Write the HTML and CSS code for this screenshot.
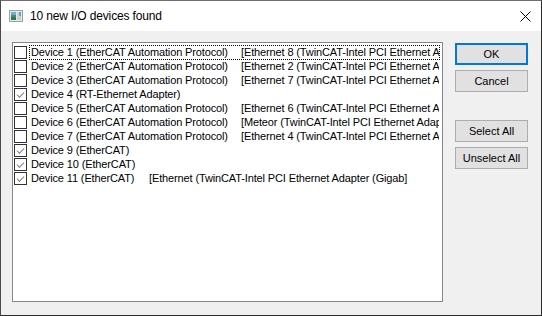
FILE: index.html
```html
<!DOCTYPE html>
<html>
<head>
<meta charset="utf-8">
<link rel="stylesheet" href="styles.css">
</head>
<body>
<div class="window">
  <div class="titlebar">
    <svg class="app-icon" width="14" height="12" viewBox="0 0 14 12">
      <rect x="0.5" y="0.5" width="13" height="11" fill="#e8e8e8" stroke="#a0a0a0"/>
      <rect x="2" y="2" width="5" height="8" fill="#3d8c8c"/>
      <rect x="2" y="2" width="5" height="3" fill="#6fb0c8"/>
      <rect x="2" y="7" width="5" height="3" fill="#2f7a4a"/>
      <rect x="8" y="2" width="4" height="8" fill="#d0d0d0"/>
      <rect x="10" y="2" width="2" height="4" fill="#4fa8d0"/>
    </svg>
    <span class="title">10 new I/O devices found</span>
    <svg class="close" width="11" height="11" viewBox="0 0 11 11">
      <path d="M0.5 0.5 L10.5 10.5 M10.5 0.5 L0.5 10.5" stroke="#000" stroke-width="1" fill="none"/>
    </svg>
  </div>
  <div class="client">
    <div class="listbox">
      <div class="item"><span class="cb"></span><span class="label focus"><span class="c1">Device 1 (EtherCAT Automation Protocol)</span><span class="c2">[Ethernet 8 (TwinCAT-Intel PCI Ethernet Adapter (Gigabit))]</span></span></div>
      <div class="item"><span class="cb"></span><span class="label"><span class="c1">Device 2 (EtherCAT Automation Protocol)</span><span class="c2">[Ethernet 2 (TwinCAT-Intel PCI Ethernet Adapter (Gigabit))]</span></span></div>
      <div class="item"><span class="cb"></span><span class="label"><span class="c1">Device 3 (EtherCAT Automation Protocol)</span><span class="c2">[Ethernet 7 (TwinCAT-Intel PCI Ethernet Adapter (Gigabit))]</span></span></div>
      <div class="item"><span class="cb checked"></span><span class="label"><span class="c1">Device 4 (RT-Ethernet Adapter)</span></span></div>
      <div class="item"><span class="cb"></span><span class="label"><span class="c1">Device 5 (EtherCAT Automation Protocol)</span><span class="c2">[Ethernet 6 (TwinCAT-Intel PCI Ethernet Adapter (Gigabit))]</span></span></div>
      <div class="item"><span class="cb"></span><span class="label"><span class="c1">Device 6 (EtherCAT Automation Protocol)</span><span class="c2">[Meteor (TwinCAT-Intel PCI Ethernet Adapter (Gigabit))]</span></span></div>
      <div class="item"><span class="cb"></span><span class="label"><span class="c1">Device 7 (EtherCAT Automation Protocol)</span><span class="c2">[Ethernet 4 (TwinCAT-Intel PCI Ethernet Adapter (Gigabit))]</span></span></div>
      <div class="item"><span class="cb checked"></span><span class="label"><span class="c1">Device 9 (EtherCAT)</span></span></div>
      <div class="item"><span class="cb checked"></span><span class="label"><span class="c1">Device 10 (EtherCAT)</span></span></div>
      <div class="item"><span class="cb checked"></span><span class="label"><span class="c1 short">Device 11 (EtherCAT)</span><span class="c2">[Ethernet (TwinCAT-Intel PCI Ethernet Adapter (Gigab]</span></span></div>
    </div>
    <div class="buttons">
      <button class="btn default">OK</button>
      <button class="btn">Cancel</button>
      <button class="btn spaced">Select All</button>
      <button class="btn">Unselect All</button>
    </div>
  </div>
</div>
</body>
</html>
```
FILE: styles.css
```css
html, body {
  margin: 0;
  padding: 0;
  background: #f0f0f0;
}
.window {
  width: 542px;
  height: 316px;
  box-sizing: border-box;
  border: 1px solid #2b2b2b;
  border-top-color: #6e6e6e;
  border-left-color: #4a4a4a;
  background: #f0f0f0;
  display: flex;
  flex-direction: column;
  overflow: hidden;
}
.titlebar {
  height: 30px;
  flex: none;
  background: #ffffff;
  display: flex;
  align-items: center;
  padding-left: 8px;
  box-sizing: border-box;
}
.app-icon {
  flex: none;
  margin-top: -1px;
}
.title {
  margin-left: 7px;
  font-family: "Liberation Sans", Arial, sans-serif;
  font-size: 12px;
  letter-spacing: -0.15px;
  color: #000;
  flex: 1;
}
.close {
  flex: none;
  margin-right: 10px;
}
.client {
  flex: 1;
  display: flex;
  padding: 11px 0 0 11px;
  gap: 12px;
}
.listbox {
  width: 431px;
  height: 260px;
  box-sizing: border-box;
  border: 1px solid #828790;
  background: #ffffff;
  padding: 2px 0 0 1px;
  overflow: hidden;
}
.item {
  height: 14px;
  display: flex;
  align-items: flex-start;
  white-space: nowrap;
  font-family: "Liberation Sans", Arial, sans-serif;
  font-size: 11px;
  letter-spacing: -0.13px;
  color: #000;
}
.cb {
  flex: none;
  width: 13px;
  height: 13px;
  box-sizing: border-box;
  border: 1px solid #333333;
  background: #fff;
  margin-top: 1px;
  position: relative;
}
.cb.checked::after {
  content: "";
  position: absolute;
  left: 2px;
  top: 1px;
  width: 6px;
  height: 3px;
  border-left: 1px solid #808080;
  border-bottom: 1px solid #808080;
  transform: translate(0px, 2px) rotate(-45deg);
  transform-origin: center;
}
.label {
  margin-left: 2px;
  margin-right: 2px;
  padding-left: 1px;
  height: 15px;
  line-height: 13px;
  box-sizing: border-box;
  display: flex;
  overflow: hidden;
  flex: 1;
  border: 1px dotted transparent;
}
.label.focus {
  border: 1px dotted #000;
}
.c1 {
  width: 210px;
  flex: none;
}
.c1.short {
  width: 118px;
}
.c2 {
  flex: none;
}
.buttons {
  display: flex;
  flex-direction: column;
  gap: 5px;
  padding-top: 1px;
}
.btn {
  width: 73px;
  height: 22px;
  box-sizing: border-box;
  background: #e1e1e1;
  border: 1px solid #adadad;
  font-family: "Liberation Sans", Arial, sans-serif;
  font-size: 11px;
  color: #000;
  padding: 0;
  margin: 0;
}
.btn.default {
  border: 2px solid #0078d7;
}
.btn.spaced {
  margin-top: 23px;
}
```
